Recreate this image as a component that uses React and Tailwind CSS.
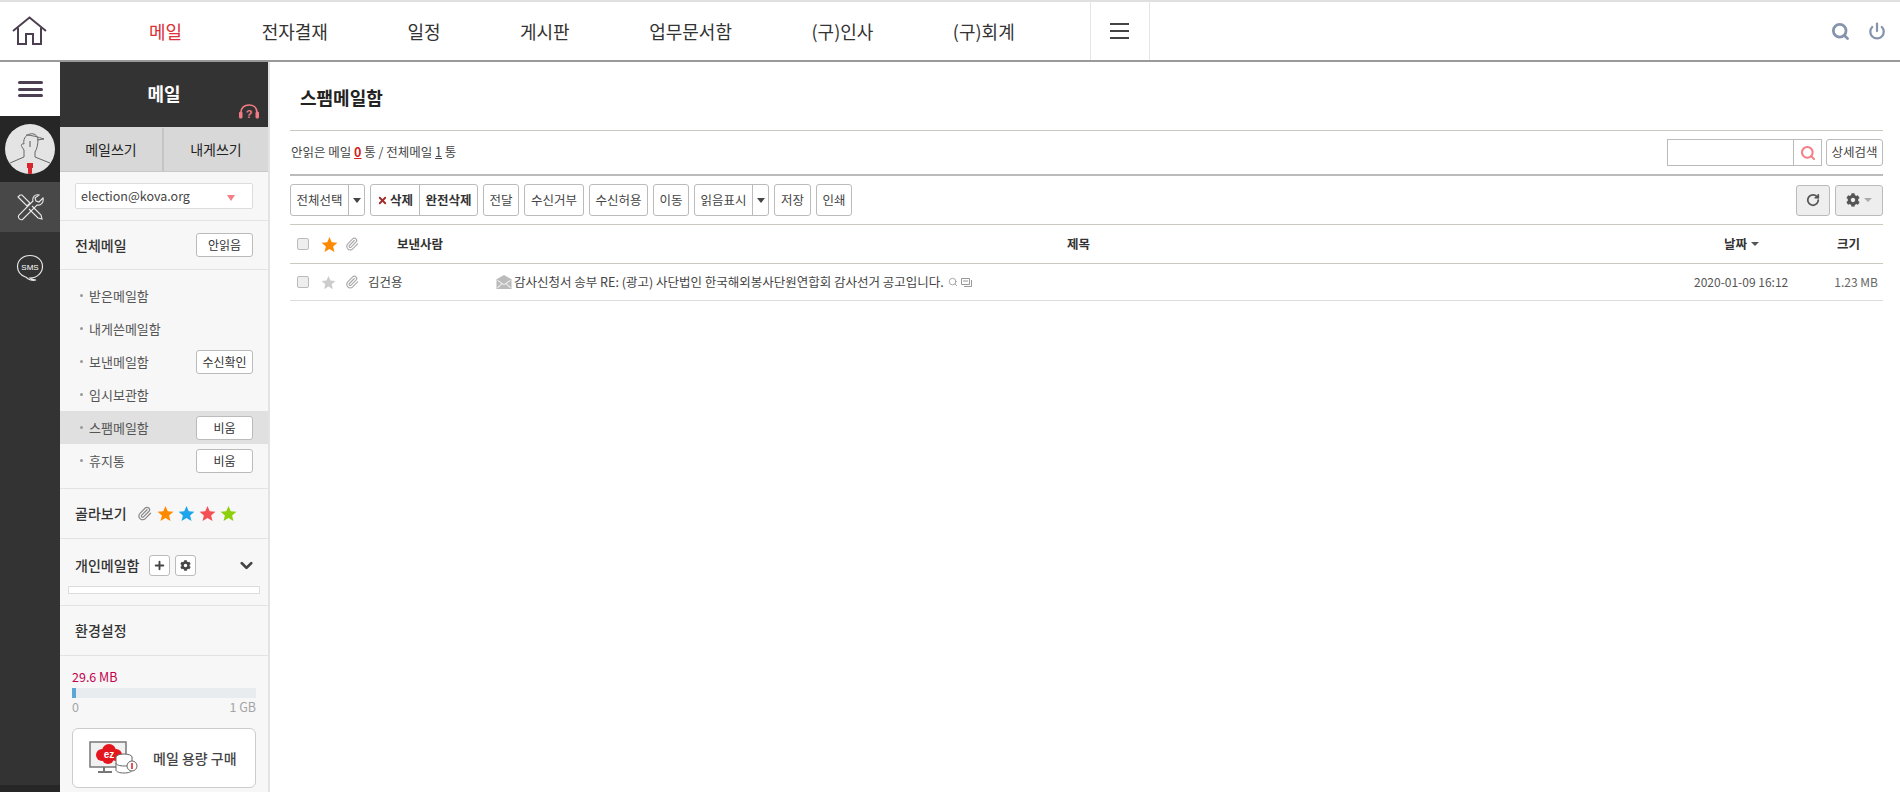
import { ChevronDown, Plus, Search, Power, RotateCw, Paperclip, X } from 'lucide-react';
import { FaCog } from 'react-icons/fa';

const navItems = ['메일', '전자결재', '일정', '게시판', '업무문서함', '(구)인사', '(구)회계'];

function Caret({ className = 'border-t-[#555]' }) {
  return <span className={`inline-block w-0 h-0 border-x-[4px] border-x-transparent border-t-[4px] ${className}`} />;
}

function SolidStar({ color, size = 18 }) {
  return (
    <svg width={size} height={size} viewBox="0 0 24 24" fill={color}>
      <path d="M12 1.500l3.200 7.400 8 .7-6.100 5.200 1.900 7.900L12 18.500 5 22.700l1.900-7.900L.8 9.600l8-.7z" />
    </svg>
  );
}

function TopNav() {
  return (
    <header className="h-[62px] flex-none flex items-center bg-white border-t-2 border-t-[#e0e0e0] border-b-2 border-b-[#999] box-border">
      <div className="w-[60px] flex justify-center">
        <svg width="36" height="30" viewBox="0 0 36 30" fill="none" stroke="#4d3f52" strokeWidth="2">
          <path d="M1 15L17.500 1.500 34 15" />
          <path d="M6 11.500V28H14V18H21V28H29V11.500" />
        </svg>
      </div>
      <nav className="flex gap-[79.500px] ml-[89px] text-[18px] leading-none text-[#333]">
        {navItems.map((n, i) => (
          <a key={n} className={i === 0 ? 'text-[#dc3038]' : ''}>{n}</a>
        ))}
      </nav>
      <div className="ml-[75px] w-[60px] h-full border-x border-[#e5e5e5] flex items-center justify-center">
        <span className="flex flex-col gap-[5px] w-[19px]">
          <i className="h-[2px] bg-[#444]" />
          <i className="h-[2px] bg-[#444]" />
          <i className="h-[2px] bg-[#444]" />
        </span>
      </div>
      <div className="ml-auto flex items-center gap-[18px] pr-[14px] text-[#8494ad]">
        <Search size={19} strokeWidth={3.500} />
        <Power size={18} strokeWidth={3} />
      </div>
    </header>
  );
}

function Rail() {
  return (
    <aside className="w-[60px] flex-none flex flex-col bg-[#333]">
      <div className="h-[54px] bg-white flex items-center justify-center">
        <span className="flex flex-col gap-[3.500px] w-[25px]">
          <i className="h-[3px] rounded-sm bg-[#4d3f52]" />
          <i className="h-[3px] rounded-sm bg-[#4d3f52]" />
          <i className="h-[3px] rounded-sm bg-[#4d3f52]" />
        </span>
      </div>
      <div className="h-[66px] bg-[#262626] flex items-center justify-center">
        <svg width="50" height="50" viewBox="0 0 50 50">
          <defs>
            <clipPath id="av"><circle cx="25" cy="25" r="25" /></clipPath>
          </defs>
          <circle cx="25" cy="25" r="25" fill="#e4e4e4" />
          <g clipPath="url(#av)" fill="none" stroke="#666" strokeWidth="1">
            <path d="M19 20c-1-4 1-9 6-10 4-1 7 1 8 5M33 15c0 5-1 10-3 13v5l15 6" />
            <path d="M19 20c-3-1-3 2-2 3l2 3v7L5 39" />
            <path d="M21 11c5 0 12 2 18 4l-7 1" />
            <path d="M25 17v6" stroke="#888" strokeWidth="1.500" />
            <path d="M22 39h6v5h-6zM23 44h4v7h-4z" fill="#d9262e" stroke="none" />
          </g>
        </svg>
      </div>
      <div className="h-[50px] bg-[#484848] flex items-center justify-center">
        <svg width="27" height="27" viewBox="0 0 27 27" fill="none" stroke="#e8e8e8" strokeWidth="1.100">
          <path d="M1 3l2-2 2 0 8 8-3 3-8-8z" />
          <path d="M15 12l9 9 1 4-4-1-9-9" />
          <path d="M26 4l-4 4-3-1-1-3 4-3c-4-1-7 2-6 6L2 21c-2 3 2 6 4 4L20 11c4 1 7-3 6-7z" />
        </svg>
      </div>
      <div className="flex justify-center mt-[22px]">
        <svg width="28" height="28" viewBox="0 0 28 28" fill="none" stroke="#e8e8e8" strokeWidth="1.200">
          <path d="M14 1.500c7 0 12.500 4.700 12.500 11S21 24 14 24c1 1 4 2 6 2-3 1-8 0-10-2.800C5 21.500 1.500 17.500 1.500 12.500 1.500 6.200 7 1.500 14 1.500z" />
          <text x="14" y="15.500" textAnchor="middle" fontSize="8" fill="#fff" stroke="none" fontFamily="Liberation Sans">SMS</text>
        </svg>
      </div>
      <div className="mt-auto h-[7px] bg-[#262626]" />
    </aside>
  );
}

function SmallBtn({ children }) {
  return (
    <button className="w-[57px] h-[24px] bg-white border border-[#bbb] rounded-[3px] text-[12px] leading-none text-[#333] flex items-center justify-center">
      {children}
    </button>
  );
}

function Folder({ name, btn, active }) {
  return (
    <li className={`h-[33px] flex items-center pl-[20px] pr-[15px] text-[13px] text-[#555] ${active ? 'bg-[#e0e0e0]' : ''}`}>
      <i className="w-[3px] h-[3px] rounded-full bg-[#999] mr-[6px]" />
      <span>{name}</span>
      {btn && <span className="ml-auto"><SmallBtn>{btn}</SmallBtn></span>}
    </li>
  );
}

function SidePanel() {
  return (
    <aside className="w-[208px] flex-none flex flex-col bg-[#f7f7f7] border-r-2 border-[#e3e3e3] box-content">
      <div className="relative h-[65px] flex-none bg-[#333] flex items-center justify-center text-white text-[18px] font-bold pb-[3px]">
        메일
        <svg className="absolute right-[8px] bottom-[7px]" width="22" height="17" viewBox="0 0 22 16" fill="none">
          <path d="M3 9C3 4 6.500 1.500 11 1.500S19 4 19 9" stroke="#f27c85" strokeWidth="1.600" />
          <rect x="1" y="8" width="3.500" height="7" rx="1.500" fill="#f27c85" />
          <rect x="17.500" y="8" width="3.500" height="7" rx="1.500" fill="#f27c85" />
          <text x="11" y="14" textAnchor="middle" fontSize="11" fontWeight="700" fill="#f27c85" fontFamily="Liberation Sans">?</text>
        </svg>
      </div>
      <div className="h-[45px] flex-none flex bg-[#d8d8d8] border-b border-[#c8c8c8] pt-px text-[14px] text-[#222]">
        <div className="w-[104px] flex items-center justify-center border-r-2 border-[#c4c4c4]">메일쓰기</div>
        <div className="flex-1 flex items-center justify-center">내게쓰기</div>
      </div>
      <div className="h-[49px] flex-none flex items-center px-[15px] border-b border-[#e3e3e3]">
        <div className="w-[178px] h-[26px] bg-white border border-[#ddd] rounded-[2px] flex items-center pl-[5px] pr-[17px] text-[12.500px] text-[#444]">
          election@kova.org
          <span className="ml-auto"><Caret className="border-x-[4.500px] border-t-[6px] border-t-[#f47d86]" /></span>
        </div>
      </div>
      <div className="h-[49px] flex-none flex items-center pl-[15px] pr-[15px] border-b border-[#e3e3e3]">
        <span className="text-[14px] font-medium text-[#333]">전체메일</span>
        <span className="ml-auto"><SmallBtn>안읽음</SmallBtn></span>
      </div>
      <ul className="pt-[9px] pb-[11px] flex-none border-b border-[#e3e3e3]">
        <Folder name="받은메일함" />
        <Folder name="내게쓴메일함" />
        <Folder name="보낸메일함" btn="수신확인" />
        <Folder name="임시보관함" />
        <Folder name="스팸메일함" btn="비움" active />
        <Folder name="휴지통" btn="비움" />
      </ul>
      <div className="h-[50px] flex-none flex items-center pl-[15px] border-b border-[#e3e3e3]">
        <span className="text-[14px] font-medium text-[#333] mr-[10px]">골라보기</span>
        <Paperclip size={15} className="text-[#888] mr-[5px]" />
        <span className="flex gap-[4px]">
          <SolidStar color="#ff8a00" size={17} />
          <SolidStar color="#1ea5ea" size={17} />
          <SolidStar color="#f44f55" size={17} />
          <SolidStar color="#8ccf0a" size={17} />
        </span>
      </div>
      <div className="h-[67px] flex-none border-b border-[#e3e3e3] pt-[16px]">
        <div className="flex items-center pl-[15px] pr-[12px]">
          <span className="text-[14px] font-medium text-[#333] mr-[10px]">개인메일함</span>
          <button className="w-[21px] h-[21px] mr-[5px] bg-white border border-[#bbb] rounded-[3px] flex items-center justify-center text-[#444]">
            <Plus size={13} strokeWidth={3.500} />
          </button>
          <button className="w-[21px] h-[21px] bg-white border border-[#bbb] rounded-[3px] flex items-center justify-center text-[#444]">
            <FaCog size={11} />
          </button>
          <ChevronDown size={19} strokeWidth={3.500} className="ml-auto text-[#444]" />
        </div>
        <div className="mx-[8px] mt-[10px] h-[8px] bg-white border border-[#ddd]" />
      </div>
      <div className="h-[50px] flex-none flex items-center pl-[15px] border-b border-[#e3e3e3]">
        <span className="text-[14px] font-medium text-[#333]">환경설정</span>
      </div>
      <div className="px-[12px] pt-[12px]">
        <div className="text-[12.500px] leading-[17px] text-[#c2004f]">29.6 MB</div>
        <div className="h-[10px] mt-[3px] bg-[#e9ecef] flex">
          <div className="w-[4px] bg-[#5ba7d6]" />
        </div>
        <div className="flex justify-between text-[12.500px] leading-[17px] text-[#a5a5a5]">
          <span>0</span>
          <span>1 GB</span>
        </div>
        <button className="mt-[13px] w-full h-[60px] bg-white border border-[#ccc] rounded-[6px] flex items-center pl-[16px] text-[14px] font-medium text-[#444]">
          <svg width="50" height="36" viewBox="0 0 50 36" className="mr-[14px]">
            <rect x="1" y="2" width="36" height="25" fill="#f1f1f1" stroke="#777" strokeWidth="1.500" />
            <path d="M15 27v4M9 32h14" stroke="#777" strokeWidth="2" />
            <g fill="#e3161f">
              <circle cx="13" cy="15" r="6" />
              <circle cx="20" cy="11" r="7" />
              <circle cx="27" cy="15" r="6" />
              <circle cx="19" cy="18" r="6" />
            </g>
            <text x="20" y="18" textAnchor="middle" fontSize="10" fontWeight="700" fill="#fff" fontFamily="Liberation Sans">ez</text>
            <ellipse cx="35" cy="17" rx="8" ry="3" fill="#fff" stroke="#666" />
            <path d="M27 17v13c0 2 4 3 8 3s8-1 8-3V17" fill="#fff" stroke="#666" />
            <path d="M27 23c0 2 4 3 8 3s8-1 8-3" fill="none" stroke="#666" />
            <circle cx="43" cy="26" r="5" fill="#fff" stroke="#666" />
            <path d="M43 23v6" stroke="#e3161f" strokeWidth="1.500" />
          </svg>
          메일 용량 구매
        </button>
      </div>
    </aside>
  );
}

function Btn({ children, className = '' }) {
  return (
    <button className={`h-[32px] bg-white border border-[#bbb] rounded-[3px] text-[12.500px] leading-none text-[#444] whitespace-nowrap ${className}`}>
      {children}
    </button>
  );
}

function SplitBtn({ children }) {
  return (
    <div className="w-[75px] flex h-[32px] bg-white border border-[#bbb] rounded-[3px] text-[12.500px] text-[#444]">
      <span className="w-[58px] flex items-center justify-center border-r border-[#bbb]">{children}</span>
      <span className="flex-1 flex items-center justify-center"><Caret className="border-x-[4px] border-t-[5px] border-t-[#444]" /></span>
    </div>
  );
}

function Toolbar() {
  return (
    <div className="h-[49px] flex items-center gap-[5px] border-b border-[#ccc9c0]">
      <SplitBtn>전체선택</SplitBtn>
      <div className="w-[108px] flex h-[32px] bg-white border border-[#bbb] rounded-[3px] text-[12.500px] font-bold text-[#333]">
        <span className="w-[49px] flex items-center justify-center gap-[2px] border-r border-[#bbb]">
          <X size={11} strokeWidth={4} className="text-[#a52a2a]" />삭제
        </span>
        <span className="flex-1 flex items-center justify-center">완전삭제</span>
      </div>
      <Btn className="w-[36px]">전달</Btn>
      <Btn className="w-[60px]">수신거부</Btn>
      <Btn className="w-[59px]">수신허용</Btn>
      <Btn className="w-[36px]">이동</Btn>
      <SplitBtn>읽음표시</SplitBtn>
      <Btn className="w-[37px]">저장</Btn>
      <Btn className="w-[36px]">인쇄</Btn>
      <button className="ml-auto w-[34px] h-[31px] bg-[#eee] border border-[#bbb] rounded-[3px] flex items-center justify-center text-[#555]">
        <RotateCw size={14} strokeWidth={3} />
      </button>
      <button className="w-[48px] h-[31px] bg-[#eee] border border-[#bbb] rounded-[3px] flex items-center justify-center gap-[4px] text-[#555]">
        <FaCog size={14} />
        <Caret className="border-t-[#aaa]" />
      </button>
    </div>
  );
}

function MailRow() {
  return (
    <div className="h-[37px] flex items-center border-b border-[#ddd] text-[12.500px] text-[#444]">
      <span className="w-[12px] h-[12px] ml-[7px] bg-[#eee] border border-[#bbb] rounded-[2px]" />
      <span className="ml-[12px]"><SolidStar color="#ccc" size={15} /></span>
      <Paperclip size={14} className="ml-[9px] text-[#aaa]" />
      <span className="ml-[9px] w-[128px] whitespace-nowrap">김건용</span>
      <svg width="16" height="14" viewBox="0 0 14 13" className="mr-[2px]">
        <path d="M0 4L7 0l7 4v9H0z" fill="#bbb" />
        <path d="M1 5l6 4 6-4M1 12l4-4M13 12L9 8" stroke="#eee" fill="none" />
      </svg>
      <span className="whitespace-nowrap">감사신청서 송부 RE: (광고) 사단법인 한국해외봉사단원연합회 감사선거 공고입니다.</span>
      <Search size={10} className="ml-[4px] text-[#999]" />
      <svg width="11" height="9" viewBox="0 0 11 9" fill="none" stroke="#999" className="ml-[3px]">
        <path d="M.5.500h8v6h-8zM2 3h5M10.500 2v6.500H3" />
      </svg>
      <span className="ml-auto w-[140px] text-[12px] text-[#555] whitespace-nowrap">2020-01-09 16:12</span>
      <span className="w-[49px] pr-[5px] text-right text-[12px] text-[#666] whitespace-nowrap">1.23 MB</span>
    </div>
  );
}

function Main() {
  return (
    <main className="flex-1 min-w-0 pl-[20px] pr-[17px] bg-white">
      <h1 className="h-[69px] flex items-center pl-[10px] pt-[3px] text-[18px] font-bold text-[#222] border-b border-[#ccc9c0]">스팸메일함</h1>
      <div className="h-[45px] flex items-center border-b-2 border-[#bbb] text-[12.500px] text-[#444]">
        <span className="pl-px">안읽은 메일 <b className="font-bold text-[#d0241f] underline">0</b> 통 / 전체메일 <span className="underline">1</span> 통</span>
        <div className="ml-auto flex items-center gap-[4px]">
          <div className="flex w-[155px] h-[27px] bg-white border border-[#bbb]">
            <span className="flex-1 border-r border-[#bbb]" />
            <span className="w-[27px] flex items-center justify-center text-[#f47d86]"><Search size={16} strokeWidth={3} /></span>
          </div>
          <Btn className="!h-[27px] w-[57px]">상세검색</Btn>
        </div>
      </div>
      <Toolbar />
      <div className="h-[39px] flex items-center border-b border-[#ccc9c0] text-[12.500px] font-bold text-[#333]">
        <span className="w-[12px] h-[12px] ml-[7px] bg-[#eee] border border-[#bbb] rounded-[2px]" />
        <span className="ml-[12px]"><SolidStar color="#ff8a00" size={17} /></span>
        <Paperclip size={14} className="ml-[7px] text-[#aaa]" />
        <span className="ml-[38px] w-[670px]">보낸사람</span>
        <span>제목</span>
        <span className="ml-auto w-[113px] flex items-center gap-[4px]">날짜 <Caret /></span>
        <span className="w-[46px]">크기</span>
      </div>
      <MailRow />
    </main>
  );
}

export default function App() {
  return (
    <div className='font-["Noto_Sans_CJK_KR","Noto_Sans",sans-serif] w-[1900px] h-[792px] flex flex-col overflow-hidden bg-white'>
      <TopNav />
      <div className="flex-1 min-h-0 flex">
        <Rail />
        <SidePanel />
        <Main />
      </div>
    </div>
  );
}
